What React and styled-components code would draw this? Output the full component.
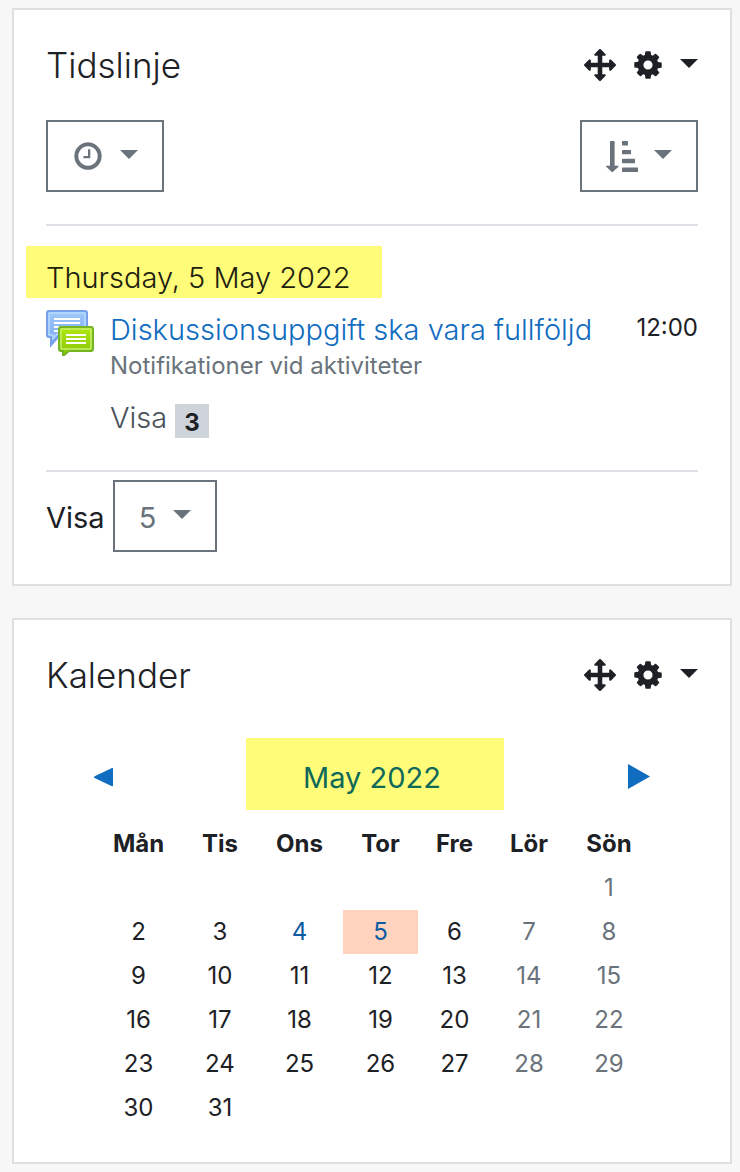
import React from "react";
import styled, { createGlobalStyle } from "styled-components";

const GlobalStyle = createGlobalStyle`
  *, *::before, *::after { box-sizing: border-box; }
  body {
    margin: 0;
    background: #f7f7f7;
    color: #1d2125;
    font-family: Inter, "Liberation Sans", sans-serif;
    font-size: 24px;
    font-weight: 400;
  }
  button, select { font: inherit; }
`;

const Page = styled.main`
  display: flex;
  flex-direction: column;
  gap: 32px;
  padding: 8px 8px 8px 12px;
`;

const Card = styled.section`
  padding: 32px;
  background: #fff;
  border: 2px solid #dfdfdf;
`;

const CardHeader = styled.header`
  display: flex;
  align-items: center;
  justify-content: space-between;
  height: 46px;
`;

const CardTitle = styled.h2`
  margin: 0;
  font-size: 35px;
  line-height: 46px;
  font-weight: 300;
`;

const CardActions = styled.div`
  display: flex;
  align-items: center;
  gap: 16px;
`;

const IconButton = styled.button`
  display: flex;
  align-items: center;
  gap: 16px;
  padding: 0;
  border: 0;
  background: none;
  color: #1d2125;
  cursor: pointer;
`;

const Icon = styled.svg`
  display: block;
  flex: none;
  width: 32px;
  height: 32px;
  fill: currentColor;
`;

const Caret = styled.span`
  flex: none;
  margin-bottom: 4px;
  border: 9px solid transparent;
  border-top-color: currentColor;
  border-bottom: 0;
`;

const Toolbar = styled.div`
  display: flex;
  justify-content: space-between;
  margin: 32px 0;
`;

const OutlineButton = styled.button`
  display: flex;
  align-items: center;
  gap: 16px;
  height: 72px;
  padding: 0 24px;
  border: 2px solid #6a737b;
  background: #fff;
  color: #6a737b;
  cursor: pointer;
`;

const Rule = styled.hr`
  height: 2px;
  margin: 0;
  border: 0;
  background: #dee2e6;
`;

const DateHeading = styled.h3`
  width: fit-content;
  margin: 20px 0 10px -20px;
  padding: 12px 31px 0 20px;
  background: #fffc79;
  color: #1d2110;
  font-size: 29px;
  line-height: 40px;
  font-weight: 300;
`;

const EventRow = styled.article`
  display: flex;
  gap: 16px;
  margin-bottom: 32px;
`;

const ForumIcon = styled.svg`
  flex: none;
  width: 48px;
  height: 48px;
`;

const EventBody = styled.div`
  flex: 1;
  min-width: 0;
  padding-top: 4px;
  line-height: 36px;
`;

const EventLink = styled.a`
  display: block;
  color: #0f6cbf;
  font-size: 29px;
  font-weight: 300;
  text-decoration: none;
`;

const EventNote = styled.div`
  color: #6a737b;
`;

const EventAction = styled.a`
  display: flex;
  align-items: flex-start;
  gap: 8px;
  margin-top: 16px;
  color: #495057;
  font-size: 29px;
  font-weight: 300;
  text-decoration: none;
`;

const Badge = styled.span`
  margin-top: 4px;
  padding: 3px 9px 0;
  background: #ced4da;
  color: #1d2125;
  font-size: 24px;
  line-height: 31px;
  font-weight: 700;
`;

const EventTime = styled.time`
  line-height: 40px;
`;

const Pager = styled.div`
  display: flex;
  align-items: center;
  gap: 8px;
  margin-top: 8px;
  font-size: 29px;
  label { padding-top: 3px; }
`;

const SelectBox = styled.div`
  display: grid;
  align-items: center;
  color: #6a737b;
  & > * { grid-area: 1 / 1; }
  & > ${Caret} {
    justify-self: end;
    margin-right: 26px;
    pointer-events: none;
  }
`;

const Select = styled.select`
  appearance: none;
  width: 104px;
  height: 72px;
  padding: 3px 24px 0;
  border: 2px solid #6a737b;
  border-radius: 0;
  background: #fff;
  color: inherit;
  cursor: pointer;
`;

const Calendar = styled.div`
  margin: 40px 47px 0;
`;

const MonthNav = styled.nav`
  display: grid;
  grid-template-columns: 153fr 258fr 147fr;
  align-items: center;
  margin-bottom: 12px;
`;

const MonthLink = styled.a`
  padding: 8px 6px 0 0;
  background: #fffc79;
  color: #0e6959;
  font-size: 29px;
  line-height: 64px;
  text-align: center;
  text-decoration: none;
`;

const ArrowLink = styled.a`
  justify-self: ${(p) => p.$side};
  padding-top: 5px;
  color: #0f6cbf;
  svg { display: block; fill: currentColor; }
`;

const MonthTable = styled.table`
  width: 100%;
  table-layout: fixed;
  border-collapse: collapse;
  text-align: center;
  th, td {
    height: 44px;
    padding: 0;
    line-height: 44px;
  }
  th { font-weight: 700; }
`;

const DayCell = styled.td`
  background: ${(p) => (p.$today ? "#ffd3bd" : "transparent")};
  color: ${(p) => (p.$weekend ? "#6a737b" : "inherit")};
`;

const DayLink = styled.a`
  color: #0b5ba3;
  text-decoration: none;
`;

const paths = {
  move: "M1792 896q0 26-19 45l-256 256q-19 19-45 19t-45-19-19-45v-128h-384v384h128q26 0 45 19t19 45-19 45l-256 256q-19 19-45 19t-45-19l-256-256q-19-19-19-45t19-45 45-19h128v-384h-384v128q0 26-19 45t-45 19-45-19l-256-256q-19-19-19-45t19-45l256-256q19-19 45-19t45 19 19 45v128h384v-384h-128q-26 0-45-19t-19-45 19-45l256-256q19-19 45-19t45 19l256 256q19 19 19 45t-19 45-45 19h-128v384h384v-128q0-26 19-45t45-19 45 19l256 256q19 19 19 45z",
  cog: "M1152 896q0-106-75-181t-181-75-181 75-75 181 75 181 181 75 181-75 75-181zm512-109v222q0 12-8 23t-20 13l-185 28q-19 54-39 91 35 50 107 138 10 12 10 25t-9 23q-27 37-99 108t-94 71q-12 0-26-9l-138-108q-44 23-91 38-16 136-29 186-7 28-36 28h-222q-14 0-24.5-8.5t-11.5-21.5l-28-184q-49-16-90-37l-141 107q-10 9-25 9-14 0-25-11-126-114-165-168-7-10-7-23 0-12 8-23 15-21 51-66.5t54-70.5q-27-50-41-99l-183-27q-13-2-21-12.5t-8-23.5v-222q0-12 8-23t19-13l186-28q14-46 39-92-40-57-107-138-10-12-10-24 0-10 9-23 26-36 98.5-107.5t94.5-71.5q13 0 26 10l138 107q44-23 91-38 16-136 29-186 7-28 36-28h222q14 0 24.5 8.5t11.5 21.5l28 184q49 16 90 37l142-107q9-9 24-9 13 0 25 10 129 119 165 170 7 8 7 22 0 12-8 23-15 21-51 66.5t-54 70.5q26 50 41 98l183 28q13 2 21 12.5t8 23.5z",
  clock: "M1024 544v448q0 14-9 23t-23 9h-320q-14 0-23-9t-9-23v-64q0-14 9-23t23-9h224v-352q0-14 9-23t23-9h64q14 0 23 9t9 23zm416 352q0-148-73-273t-198-198-273-73-273 73-198 198-73 273 73 273 198 198 273 73 273-73 198-198 73-273zm224 0q0 209-103 385.5t-279.5 279.5-385.5 103-385.5-103-279.5-279.5-103-385.5 103-385.5 279.5-279.5 385.5-103 385.5 103 279.5 279.5 103 385.5z",
};

const Glyph = ({ name }) => (
  <Icon viewBox="0 0 1792 1792" aria-hidden="true">
    <path d={paths[name]} />
  </Icon>
);

const SortGlyph = () => (
  <Icon viewBox="0 -1 32 33" preserveAspectRatio="none" aria-hidden="true">
    <path d="M4.600 0H8q.6 0 .6.6V25.600H12q1 .2.4 1L6.800 32q-.5.5-1 0L.2 26.600Q-.3 25.800.6 25.600H4V.6Q4 0 4.600 0z" />
    <rect x="16" y="0" width="6" height="4.600" rx=".6" />
    <rect x="16" y="9.200" width="9" height="4.600" rx=".6" />
    <rect x="16" y="18.300" width="13" height="4.600" rx=".6" />
    <rect x="16" y="27.400" width="16" height="4.600" rx=".6" />
  </Icon>
);

const Forum = () => (
  <ForumIcon viewBox="0 0 48 48" aria-hidden="true">
    <defs>
      <linearGradient id="blueFill" x1="0" y1="0" x2="0" y2="1">
        <stop offset="0" stopColor="#a3c9fb" />
        <stop offset="1" stopColor="#77a6ee" />
      </linearGradient>
      <linearGradient id="greenFill" x1="0" y1="0" x2="0" y2="1">
        <stop offset="0" stopColor="#b2e80d" />
        <stop offset="1" stopColor="#86c40a" />
      </linearGradient>
    </defs>
    <path d="M3 3h36q2 0 2 2v22q0 2-2 2H12l-7 8V29H3q-2 0-2-2V5q0-2 2-2z" fill="url(#blueFill)" stroke="#789fea" strokeWidth="2" />
    <path d="M4 5h34q1 0 1 1v20H11l-4 4.500V27H3V6q0-1 1-1z" fill="none" stroke="#b5dcff" strokeWidth="1.500" />
    <path d="M8 11h26M8 15h26M8 19h5M8 23h5" stroke="#fff" strokeWidth="2" />
    <path d="M15 19h30q2 0 2 2v20q0 2-2 2H23l-6 5v-5h-2q-2 0-2-2V21q0-2 2-2z" fill="url(#greenFill)" stroke="#75b525" strokeWidth="2" />
    <path d="M16 21h28q1 0 1 1v18q0 1-1 1H16q-1 0-1-1V22q0-1 1-1z" fill="none" stroke="#c6ef6c" strokeWidth="1.500" />
    <path d="M20 27h20M20 31h20M20 35h20" stroke="#fff" strokeWidth="2" />
  </ForumIcon>
);

const BlockHeader = ({ title }) => (
  <CardHeader>
    <CardTitle>{title}</CardTitle>
    <CardActions>
      <IconButton type="button" aria-label={`Flytta ${title}`}>
        <Glyph name="move" />
      </IconButton>
      <IconButton type="button" aria-label={`Inställningar för ${title}`} aria-haspopup="menu">
        <Glyph name="cog" />
        <Caret />
      </IconButton>
    </CardActions>
  </CardHeader>
);

const weekdays = [
  { name: "Mån", width: 91 },
  { name: "Tis", width: 72 },
  { name: "Ons", width: 87 },
  { name: "Tor", width: 75 },
  { name: "Fre", width: 73 },
  { name: "Lör", width: 76 },
  { name: "Sön", width: 84 },
];
const today = 5;
const eventDays = [4, 5];
const weeks = Array.from({ length: 6 }, (_, week) =>
  weekdays.map((_, i) => {
    const day = week * 7 + i - 5;
    return day > 0 && day <= 31 ? day : null;
  })
);

export default function App() {
  return (
    <>
      <GlobalStyle />
      <Page>
        <Card>
          <BlockHeader title="Tidslinje" />
          <Toolbar>
            <OutlineButton type="button" aria-label="Filtrera på datum" aria-haspopup="menu">
              <Glyph name="clock" />
              <Caret />
            </OutlineButton>
            <OutlineButton type="button" aria-label="Sortera" aria-haspopup="menu">
              <SortGlyph />
              <Caret />
            </OutlineButton>
          </Toolbar>
          <Rule />
          <DateHeading>Thursday, 5 May 2022</DateHeading>
          <EventRow>
            <Forum />
            <EventBody>
              <EventLink href="#event">Diskussionsuppgift ska vara fullföljd</EventLink>
              <EventNote>Notifikationer vid aktiviteter</EventNote>
              <EventAction href="#show">
                Visa <Badge>3</Badge>
              </EventAction>
            </EventBody>
            <EventTime>12:00</EventTime>
          </EventRow>
          <Rule />
          <Pager>
            <label htmlFor="limit">Visa</label>
            <SelectBox>
              <Select id="limit" defaultValue="5">
                <option>5</option>
                <option>10</option>
                <option>25</option>
              </Select>
              <Caret />
            </SelectBox>
          </Pager>
        </Card>

        <Card>
          <BlockHeader title="Kalender" />
          <Calendar>
            <MonthNav>
              <ArrowLink href="#previous" $side="start" aria-label="Föregående månad">
                <svg width="21" height="20" viewBox="0 0 21 20">
                  <path d="M1.600 9.200 19 .9q1-.4 1 .7v17q0 1-1 .6L1.600 11Q0 10.100 1.600 9.200z" />
                </svg>
              </ArrowLink>
              <MonthLink href="#month">May 2022</MonthLink>
              <ArrowLink href="#next" $side="end" aria-label="Nästa månad">
                <svg width="23" height="26" viewBox="0 0 23 26">
                  <path d="M0 0 22 12.500 0 25z" />
                </svg>
              </ArrowLink>
            </MonthNav>
            <MonthTable>
              <colgroup>
                {weekdays.map((d) => (
                  <col key={d.name} width={d.width} />
                ))}
              </colgroup>
              <thead>
                <tr>
                  {weekdays.map((d) => (
                    <th key={d.name} scope="col">{d.name}</th>
                  ))}
                </tr>
              </thead>
              <tbody>
                {weeks.map((week, w) => (
                  <tr key={w}>
                    {week.map((day, i) => (
                      <DayCell key={i} $weekend={i > 4} $today={day === today}>
                        {eventDays.includes(day) ? <DayLink href={`#day-${day}`}>{day}</DayLink> : day}
                      </DayCell>
                    ))}
                  </tr>
                ))}
              </tbody>
            </MonthTable>
          </Calendar>
        </Card>
      </Page>
    </>
  );
}
